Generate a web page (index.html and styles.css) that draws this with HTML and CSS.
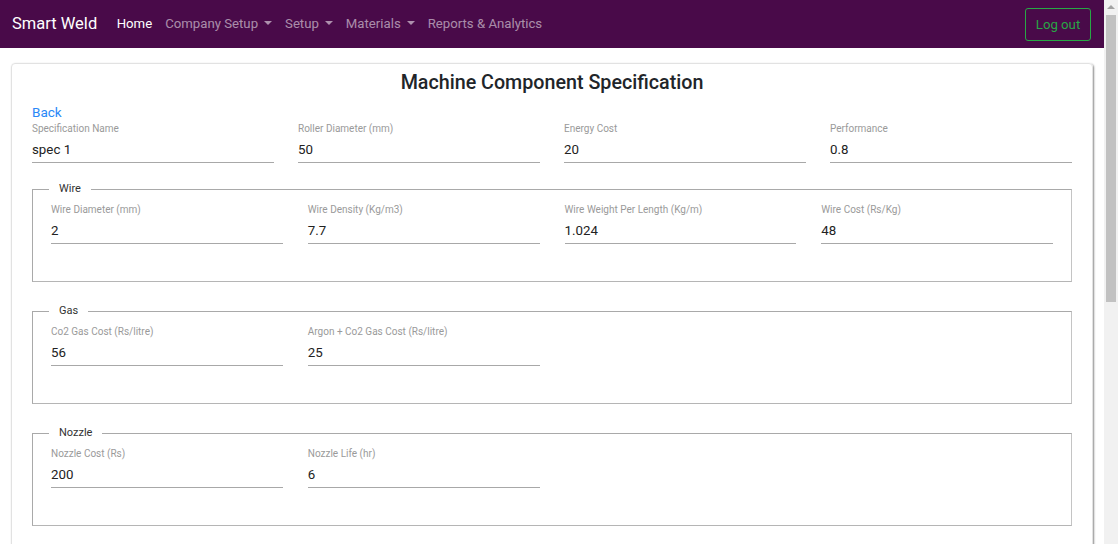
FILE: index.html
```html
<!DOCTYPE html>
<html lang="en">
<head>
<meta charset="utf-8">
<title>Smart Weld</title>
<link rel="stylesheet" href="styles.css">
</head>
<body>
<div class="page">
  <nav class="navbar">
    <a class="brand" href="#">Smart Weld</a>
    <ul class="nav">
      <li><a class="nav-link active" href="#">Home</a></li>
      <li><a class="nav-link dropdown" href="#">Company Setup</a></li>
      <li><a class="nav-link dropdown" href="#">Setup</a></li>
      <li><a class="nav-link dropdown" href="#">Materials</a></li>
      <li><a class="nav-link" href="#">Reports &amp; Analytics</a></li>
    </ul>
    <button class="logout">Log out</button>
  </nav>

  <main class="card">
    <h1 class="title">Machine Component Specification</h1>
    <a class="back" href="#">Back</a>

    <div class="grid grid-top">
      <div class="field"><label>Specification Name</label><div class="input">spec 1</div></div>
      <div class="field"><label>Roller Diameter (mm)</label><div class="input">50</div></div>
      <div class="field"><label>Energy Cost</label><div class="input">20</div></div>
      <div class="field"><label>Performance</label><div class="input">0.8</div></div>
    </div>

    <fieldset class="group">
      <legend>Wire</legend>
      <div class="grid grid-inner">
        <div class="field"><label>Wire Diameter (mm)</label><div class="input">2</div></div>
        <div class="field"><label>Wire Density (Kg/m3)</label><div class="input">7.7</div></div>
        <div class="field"><label>Wire Weight Per Length (Kg/m)</label><div class="input">1.024</div></div>
        <div class="field"><label>Wire Cost (Rs/Kg)</label><div class="input">48</div></div>
      </div>
    </fieldset>

    <fieldset class="group">
      <legend>Gas</legend>
      <div class="grid grid-inner">
        <div class="field"><label>Co2 Gas Cost (Rs/litre)</label><div class="input">56</div></div>
        <div class="field"><label>Argon + Co2 Gas Cost (Rs/litre)</label><div class="input">25</div></div>
      </div>
    </fieldset>

    <fieldset class="group">
      <legend>Nozzle</legend>
      <div class="grid grid-inner">
        <div class="field"><label>Nozzle Cost (Rs)</label><div class="input">200</div></div>
        <div class="field"><label>Nozzle Life (hr)</label><div class="input">6</div></div>
      </div>
    </fieldset>
  </main>
</div>
<div class="scrollbar" aria-hidden="true">
  <div class="sb-arrow"></div>
  <div class="sb-thumb"></div>
</div>
</body>
</html>
```

FILE: styles.css
```css
* { box-sizing: border-box; }

html, body {
  margin: 0;
  padding: 0;
  background: #ffffff;
  font-family: Roboto, "Liberation Sans", Arial, sans-serif;
  color: #212529;
}

body {
  display: flex;
  align-items: flex-start;
}

.page {
  flex: 1;
  min-width: 0;
}

/* fake classic scrollbar column */
.scrollbar {
  position: sticky;
  top: 0;
  width: 14px;
  height: 100vh;
  flex: none;
  background: #f1f1f1;
  display: flex;
  flex-direction: column;
  align-items: center;
}

.sb-arrow {
  margin-top: 5px;
  width: 0;
  height: 0;
  border-left: 4px solid transparent;
  border-right: 4px solid transparent;
  border-bottom: 4px solid #a3a3a3;
}

.sb-thumb {
  margin-top: 6px;
  width: 10px;
  height: 287px;
  background: #c1c1c1;
}

.navbar {
  height: 48px;
  background: #490a49;
  display: flex;
  align-items: center;
  padding: 0 13px 0 12px;
}

.brand {
  color: #ffffff;
  text-decoration: none;
  font-size: 16.5px;
  margin-right: 13px;
  line-height: 24px;
}

.nav {
  list-style: none;
  margin: 0;
  padding: 0;
  display: flex;
  flex: 1;
}

.nav-link {
  display: block;
  padding: 6px 6.5px;
  font-size: 13.2px;
  color: rgba(255, 255, 255, 0.55);
  text-decoration: none;
  line-height: 20px;
}

.nav-link.active { color: #ffffff; }

.nav-link.dropdown::after {
  content: "";
  display: inline-block;
  margin-left: 6px;
  vertical-align: 3px;
  border-top: 4px solid;
  border-left: 4px solid transparent;
  border-right: 4px solid transparent;
}

.logout {
  background: transparent;
  border: 1px solid #28a745;
  color: #28a745;
  font-family: inherit;
  font-size: 13.2px;
  border-radius: 3px;
  height: 33px;
  width: 66px;
  padding: 0;
}

.card {
  margin: 15px 11px 0;
  border: 1px solid #e2e2e2;
  border-radius: 4px;
  box-shadow: 1px 1px 2px rgba(0, 0, 0, 0.45);
  padding: 7px 20px 40px;
  min-height: 920px;
}

.title {
  margin: 0 0 8px;
  text-align: center;
  font-size: 19.7px;
  font-weight: 500;
  line-height: 24px;
  color: #212529;
}

.back {
  display: block;
  font-size: 13.5px;
  line-height: 18px;
  color: #2a88f7;
  text-decoration: none;
  width: max-content;
}

.grid {
  display: grid;
  grid-template-columns: repeat(4, 1fr);
}

.grid-top { column-gap: 24px; }
.grid-inner { column-gap: 25px; }

.field label {
  display: block;
  font-size: 10px;
  line-height: 16px;
  color: #9a9a9a;
}

.field .input {
  height: 26px;
  border-bottom: 1px solid #a8a8a8;
  font-size: 13.3px;
  line-height: 25px;
  color: #222222;
}

.group {
  margin: 19px 0 0;
  padding: 6px 18px 37px;
  border: 1px solid #a9a9a9;
  border-right-color: #c4c4c4;
  border-bottom-color: #b5b5b5;
  min-width: 0;
}

.group + .group { margin-top: 22px; }

.group legend {
  font-size: 11px;
  line-height: 14px;
  padding: 0 10px;
  margin-left: -2px;
  color: #333333;
}
```
